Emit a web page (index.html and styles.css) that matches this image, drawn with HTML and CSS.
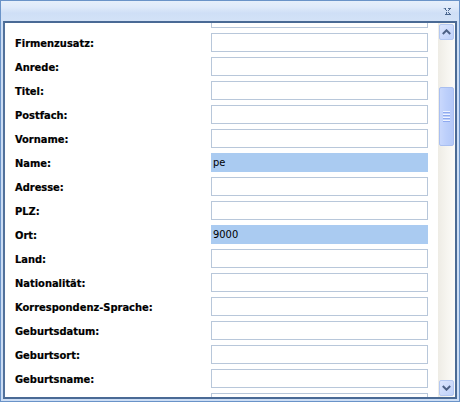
FILE: index.html
```html
<!DOCTYPE html>
<html>
<head>
<meta charset="utf-8">
<link rel="stylesheet" href="styles.css">
</head>
<body>
<div class="window">
  <div class="titlebar">
    <svg class="close" width="8" height="7" viewBox="0 0 8 7">
      <path d="M0 0h3v1h-1v1h1v1h2v-1h1v-1h-1v-1h3v1h-1v1h-1v1h-1v1h1v1h1v1h1v1h-3v-1h1v-1h-1v-1h-2v1h1v1h1v1h-3v-1h1v-1h1v-1h1v-1h-1v-1h-1v-1h-1z" fill="#4b6890"/>
    </svg>
  </div>
  <div class="panel">
    <div class="content">
      <div class="rows">
        <div class="row"><span class="lbl"></span><input class="field" type="text"></div>
        <div class="row"><label class="lbl">Firmenzusatz:</label><input class="field" type="text"></div>
        <div class="row"><label class="lbl">Anrede:</label><input class="field" type="text"></div>
        <div class="row"><label class="lbl">Titel:</label><input class="field" type="text"></div>
        <div class="row"><label class="lbl">Postfach:</label><input class="field" type="text"></div>
        <div class="row"><label class="lbl">Vorname:</label><input class="field" type="text"></div>
        <div class="row"><label class="lbl">Name:</label><input class="field filled" type="text" value="pe"></div>
        <div class="row"><label class="lbl">Adresse:</label><input class="field" type="text"></div>
        <div class="row"><label class="lbl">PLZ:</label><input class="field" type="text"></div>
        <div class="row"><label class="lbl">Ort:</label><input class="field filled" type="text" value="9000"></div>
        <div class="row"><label class="lbl">Land:</label><input class="field" type="text"></div>
        <div class="row"><label class="lbl">Nationalität:</label><input class="field" type="text"></div>
        <div class="row"><label class="lbl">Korrespondenz-Sprache:</label><input class="field" type="text"></div>
        <div class="row"><label class="lbl">Geburtsdatum:</label><input class="field" type="text"></div>
        <div class="row"><label class="lbl">Geburtsort:</label><input class="field" type="text"></div>
        <div class="row"><label class="lbl">Geburtsname:</label><input class="field" type="text"></div>
        <div class="row"><span class="lbl"></span><input class="field" type="text"></div>
      </div>
    </div>
    <div class="scrollbar">
      <div class="sb-btn">
        <svg width="9" height="6" viewBox="0 0 9 6"><path d="M0.8 5L4.5 1.3L8.2 5" fill="none" stroke="#4d6185" stroke-width="2"/></svg>
      </div>
      <div class="sb-track">
        <div class="sb-space-top"></div>
        <div class="sb-thumb">
          <div class="grip"><span></span><span></span><span></span><span></span></div>
        </div>
      </div>
      <div class="sb-btn">
        <svg width="9" height="6" viewBox="0 0 9 6"><path d="M0.8 1L4.5 4.7L8.2 1" fill="none" stroke="#4d6185" stroke-width="2"/></svg>
      </div>
    </div>
  </div>
</div>
</body>
</html>
```

FILE: styles.css
```css
html, body {
  margin: 0;
  padding: 0;
  background: #ffffff;
}

.window {
  width: 460px;
  height: 402px;
  box-sizing: border-box;
  border: 1px solid #6a93c8;
  background: #cddef5;
  display: flex;
  flex-direction: column;
}

.titlebar {
  height: 20px;
  flex: none;
  background: linear-gradient(#e6effb 0%, #dfeafa 30%, #cfdff6 60%, #d3e2f7 100%);
  display: flex;
  justify-content: flex-end;
  align-items: flex-start;
}

.close {
  margin-top: 7px;
  margin-right: 8px;
}

.panel {
  flex: 1;
  margin: 0 2px 2px 2px;
  border: 2px solid #4a6a95;
  border-left-color: #52729c;
  background: #ffffff;
  display: flex;
  overflow: hidden;
}

.content {
  flex: 1;
  overflow: hidden;
  padding: 0 10px 0 10px;
}

.rows {
  margin-top: -17px;
}

.row {
  height: 24px;
  display: flex;
  align-items: flex-start;
  justify-content: space-between;
}

.lbl {
  font-family: "DejaVu Sans Condensed", "DejaVu Sans", sans-serif;
  font-weight: bold;
  font-size: 11px;
  color: #000000;
  line-height: 19px;
  margin-top: 4px;
  -webkit-text-stroke: 0.2px #000000;
}

.field {
  margin: 3px 0 0 0;
  width: 217px;
  height: 19px;
  box-sizing: border-box;
  border: 1px solid #b8c7da;
  padding: 0 1px;
  font-family: "DejaVu Sans Condensed", "DejaVu Sans", sans-serif;
  font-size: 11px;
  color: #000000;
  background: #ffffff;
  outline: none;
}

.field.filled {
  background: #aacbf1;
  border-color: #aacbf1;
}

.scrollbar {
  width: 17px;
  flex: none;
  display: flex;
  flex-direction: column;
  background: linear-gradient(to right, #eeece5, #f7f6f1 60%, #fbfbf9);
}

.sb-btn {
  height: 16px;
  margin: 1px;
  box-sizing: border-box;
  border: 1px solid #b4c8f1;
  border-radius: 2px;
  background: linear-gradient(to bottom right, #dce6fd, #bfd1fa);
  display: flex;
  align-items: center;
  justify-content: center;
}

.sb-track {
  flex: 1;
  display: flex;
  flex-direction: column;
}

.sb-space-top {
  height: 46px;
}

.sb-thumb {
  height: 59px;
  margin: 0 1px;
  box-sizing: border-box;
  border: 1px solid #a9bff0;
  border-radius: 2px;
  background: linear-gradient(to right, #c9d8fc, #bccffb 50%, #b4c9f8);
  display: flex;
  align-items: center;
  justify-content: center;
}

.grip {
  display: flex;
  flex-direction: column;
  gap: 1px;
}

.grip span {
  display: block;
  width: 7px;
  height: 1px;
  background: #eef3ff;
  border-bottom: 1px solid #8faaf0;
}
```
